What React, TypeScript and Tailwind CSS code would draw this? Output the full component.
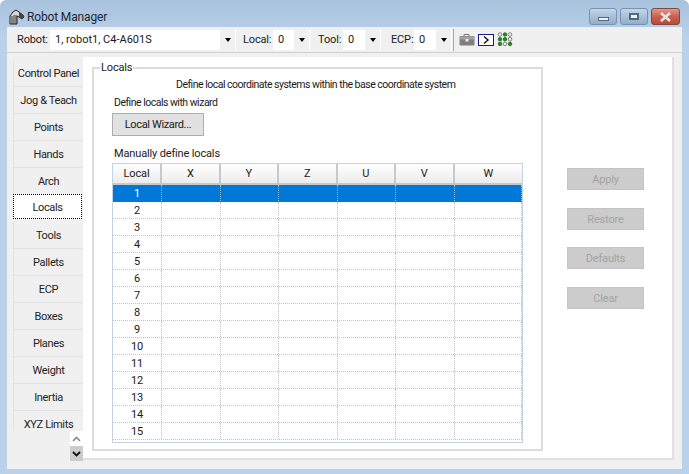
const TABS = ['Control Panel', 'Jog & Teach', 'Points', 'Hands', 'Arch', 'Locals', 'Tools', 'Pallets', 'ECP', 'Boxes', 'Planes', 'Weight', 'Inertia', 'XYZ Limits'];
const COLUMNS = [
  { label: 'X', width: 'w-[58.5px]' },
  { label: 'Y', width: 'w-[58.5px]' },
  { label: 'Z', width: 'w-[58.5px]' },
  { label: 'U', width: 'w-[58.5px]' },
  { label: 'V', width: 'w-[58.5px]' },
  { label: 'W', width: 'flex-1' },
];
const ROWS = Array.from({ length: 15 }, (_, i) => i + 1);
const ACTIONS = [
  { label: 'Apply', margin: 'mt-0' },
  { label: 'Restore', margin: 'mt-[18px]' },
  { label: 'Defaults', margin: 'mt-[17px]' },
  { label: 'Clear', margin: 'mt-[18px]' },
];
// green = lit, the rest are hollow
const DOTS = [
  [false, true, false],
  [true, true, false],
  [true, false, true],
];

function ComboArrow() {
  return (
    <div className="flex h-full w-[15px] items-center justify-center bg-[#f0f0f0]">
      <div className="h-0 w-0 border-x-[3.5px] border-t-[4px] border-x-transparent border-t-black" />
    </div>
  );
}

function Combo({ value, width }: { value: string; width: string }) {
  return (
    <div className={`flex h-[20px] items-center justify-between bg-white pl-[5px] pr-[1px] ${width}`}>
      <span className="pt-px tracking-normal">{value}</span>
      <ComboArrow />
    </div>
  );
}

function TitleIcon() {
  return (
    <svg width="16" height="16" viewBox="0 0 16 16" className="shrink-0">
      <path d="M1 15V7l3-4 3-2 3 2 4 3 1 2-2 2-3-2-2-1v8z" fill="#d8d8d8" stroke="#222" strokeWidth="1" />
      <path d="M3 15V7M5 15V6M7 15V6" stroke="#333" strokeWidth="1" />
      <path d="M10 3l4 3 1 2-2 2-3-2z" fill="#444" />
    </svg>
  );
}

function CameraIcon() {
  return (
    <svg width="16" height="13" viewBox="0 0 16 13">
      <path d="M5 3V1.5h5V3" fill="none" stroke="#777" strokeWidth="1" />
      <rect x="0.5" y="3" width="15" height="9.5" rx="1" fill="#7f7f7f" />
      <rect x="1" y="3.5" width="14" height="3" fill="#a3a3a3" />
      <rect x="6.5" y="6" width="3" height="2.5" fill="#e8e8e8" />
    </svg>
  );
}

function PromptIcon() {
  return (
    <svg width="16" height="12" viewBox="0 0 16 12">
      <rect x="0.5" y="0.5" width="15" height="11" fill="#fff" stroke="#1a1a8c" />
      <path d="M6 2.5L10 6l-4 3.5" fill="none" stroke="#111" strokeWidth="1.4" />
    </svg>
  );
}

function DotsIcon() {
  return (
    <svg width="16" height="15" viewBox="0 0 16 15">
      {DOTS.map((row, r) =>
        row.map((lit, c) => (
          <circle
            key={`${r}-${c}`}
            cx={3 + c * 5}
            cy={2.5 + r * 4.7}
            r="1.8"
            fill={lit ? '#1f8a1f' : '#f4f4f4'}
            stroke={lit ? '#14661a' : '#555'}
            strokeWidth="0.7"
          />
        )),
      )}
    </svg>
  );
}

function TitleBar() {
  return (
    <div className="flex h-[27px] shrink-0 items-start justify-between pl-[9px] pr-[9px]">
      <div className="mt-[8px] flex items-center gap-[2px] text-[12px] leading-[17px] text-[#1c2733]">
        <TitleIcon />
        <span className="pt-px">Robot Manager</span>
      </div>
      <div className="mt-[8px] flex gap-[3px]">
        <div className="flex h-[17px] w-[28px] items-center justify-center rounded-[3px] border border-[#7893b0] bg-gradient-to-b from-[#c4d6e8] via-[#a8c0da] to-[#93aeca]">
          <div className="mt-[5px] h-[4px] w-[11px] border border-[#55677a] bg-[#eef2f6]" />
        </div>
        <div className="flex h-[17px] w-[28px] items-center justify-center rounded-[3px] border border-[#7893b0] bg-gradient-to-b from-[#c4d6e8] via-[#a8c0da] to-[#93aeca]">
          <div className="h-[7px] w-[10px] border-2 border-[#55677a] bg-[#eef2f6]" />
        </div>
        <div className="flex h-[17px] w-[29px] items-center justify-center rounded-[3px] border border-[#84483e] bg-gradient-to-b from-[#dc9a8d] via-[#c8604f] to-[#bb4a39]">
          <svg width="13" height="10" viewBox="0 0 13 10">
            <path d="M2 1l9 8M11 1L2 9" stroke="#e4e4e4" strokeWidth="2.6" />
          </svg>
        </div>
      </div>
    </div>
  );
}

function Toolbar() {
  return (
    <div className="flex h-[26px] shrink-0 items-center border-b border-[#cfcfcf] pl-[10px]">
      <span className="w-[33px] pt-px">Robot:</span>
      <Combo value="1, robot1, C4-A601S" width="w-[186px]" />
      <span className="ml-[7px] w-[30px] pt-px">Local:</span>
      <Combo value="0" width="w-[37px]" />
      <span className="ml-[8px] w-[25px] pt-px">Tool:</span>
      <Combo value="0" width="w-[38px]" />
      <span className="ml-[10px] w-[23px] pt-px">ECP:</span>
      <Combo value="0" width="w-[38px]" />
      <div className="ml-[1px] h-[22px] w-px bg-[#a6a6a6]" />
      <div className="ml-[5px] flex items-center gap-[3px]">
        <CameraIcon />
        <PromptIcon />
        <DotsIcon />
      </div>
    </div>
  );
}

function TabColumn() {
  return (
    <div className="flex w-[76px] shrink-0 flex-col pl-[6px]">
      <div className="h-[378px] overflow-hidden pt-[7px] tracking-[-0.35px]">
        {TABS.map((tab) =>
          tab === 'Locals' ? (
            <div key={tab} className="-mt-px h-[28px] pb-[3px]">
              <div className="flex h-[25px] w-[69px] items-center justify-center border border-dotted border-black bg-white pt-[3px]">{tab}</div>
            </div>
          ) : (
            <div
              key={tab}
              className="flex h-[27px] items-center justify-center border-b border-l border-[#e2e2e2] pt-[2px] text-[#222]"
            >
              {tab}
            </div>
          ),
        )}
      </div>
      <div className="flex w-[13px] flex-col self-end">
        <div className="flex h-[15px] items-center justify-center bg-white">
          <svg width="9" height="6" viewBox="0 0 9 6">
            <path d="M1 5l3.5-3.5L8 5" fill="none" stroke="#8a8a8a" strokeWidth="1.6" />
          </svg>
        </div>
        <div className="flex h-[15px] items-center justify-center bg-[#cccccc]">
          <svg width="9" height="6" viewBox="0 0 9 6">
            <path d="M1 1l3.5 3.5L8 1" fill="none" stroke="#111" strokeWidth="1.8" />
          </svg>
        </div>
      </div>
    </div>
  );
}

function LocalsGrid() {
  return (
    <div className="ml-[18px] mt-[2px] h-[280px] w-[411px] border border-[#c4d3e3] bg-white">
      <div className="flex h-[21px] border-b-2 border-[#c8c8c8]">
        <div className="flex w-[49px] items-center justify-center border-r-2 border-[#c8c8c8] bg-gradient-to-b from-white to-[#ececec] pt-px">Local</div>
        {COLUMNS.map((col) => (
          <div
            key={col.label}
            className={`flex items-center justify-center border-r-2 border-[#c8c8c8] bg-gradient-to-b from-white to-[#ececec] pt-px last:border-r-0 ${col.width}`}
          >
            {col.label}
          </div>
        ))}
      </div>
      {ROWS.map((row) => {
        const line = row === 1 ? 'border-[#8fc3ee]' : 'border-[#c4c4c4]';
        return (
          <div
            key={row}
            className={`flex h-[17px] border-b border-dotted ${row === 1 ? 'border-[#0078d7] bg-[#0078d7] text-white' : 'border-[#c4c4c4]'}`}
          >
            <div className={`flex w-[49px] items-center justify-center border-r border-dotted pt-[2px] ${line}`}>{row}</div>
            {COLUMNS.map((col) => (
              <div key={col.label} className={`border-r border-dotted ${line} ${col.width}`} />
            ))}
          </div>
        );
      })}
    </div>
  );
}

export default function App() {
  return (
    <div className="flex h-[474px] w-[689px] flex-col overflow-hidden rounded-t-[6px] bg-gradient-to-b from-[#a9c2dd] to-[#b9d1ea] to-[8%] font-['Roboto',sans-serif] text-[11px] tracking-[-0.15px] text-[#1a1a1a]">
      <TitleBar />
      <div className="mx-[7px] mb-[5px] flex h-[442px] flex-col bg-[#f0f0f0]">
        <Toolbar />
        <div className="flex flex-1">
          <TabColumn />
          <div className="mb-[9px] mr-[8px] mt-[4px] flex flex-1 border-b-2 border-r-2 border-[#e0e0e0] bg-white">
            <div className="relative ml-[9px] mt-[10px] h-[384px] w-[451px] border-2 border-[#dcdcdc]">
              <span className="absolute -top-[8px] left-[6px] bg-white px-[1px] leading-[14px]">Locals</span>
              <div className="mt-[9px] pl-[82px] text-[10.5px] leading-[14px] tracking-[-0.5px]">Define local coordinate systems within the base coordinate system</div>
              <div className="ml-[20px] mt-[4px] text-[10.5px] leading-[14px] tracking-[-0.5px]">Define locals with wizard</div>
              <div className="ml-[18px] mt-[3px] flex h-[23px] w-[92px] items-center justify-center border border-[#adadad] bg-[#e1e1e1] pt-px tracking-[-0.35px]">Local Wizard...</div>
              <div className="ml-[20px] mt-[11px] leading-[14px]">Manually define locals</div>
              <LocalsGrid />
            </div>
            <div className="ml-[24px] mt-[111px] flex w-[77px] flex-col">
              {ACTIONS.map((action) => (
                <div
                  key={action.label}
                  className={`flex h-[22px] items-center justify-center border border-[#c4c4c4] bg-[#cccccc] pt-[2px] text-[#a3a3a3] ${action.margin}`}
                >
                  {action.label}
                </div>
              ))}
            </div>
          </div>
        </div>
      </div>
    </div>
  );
}
